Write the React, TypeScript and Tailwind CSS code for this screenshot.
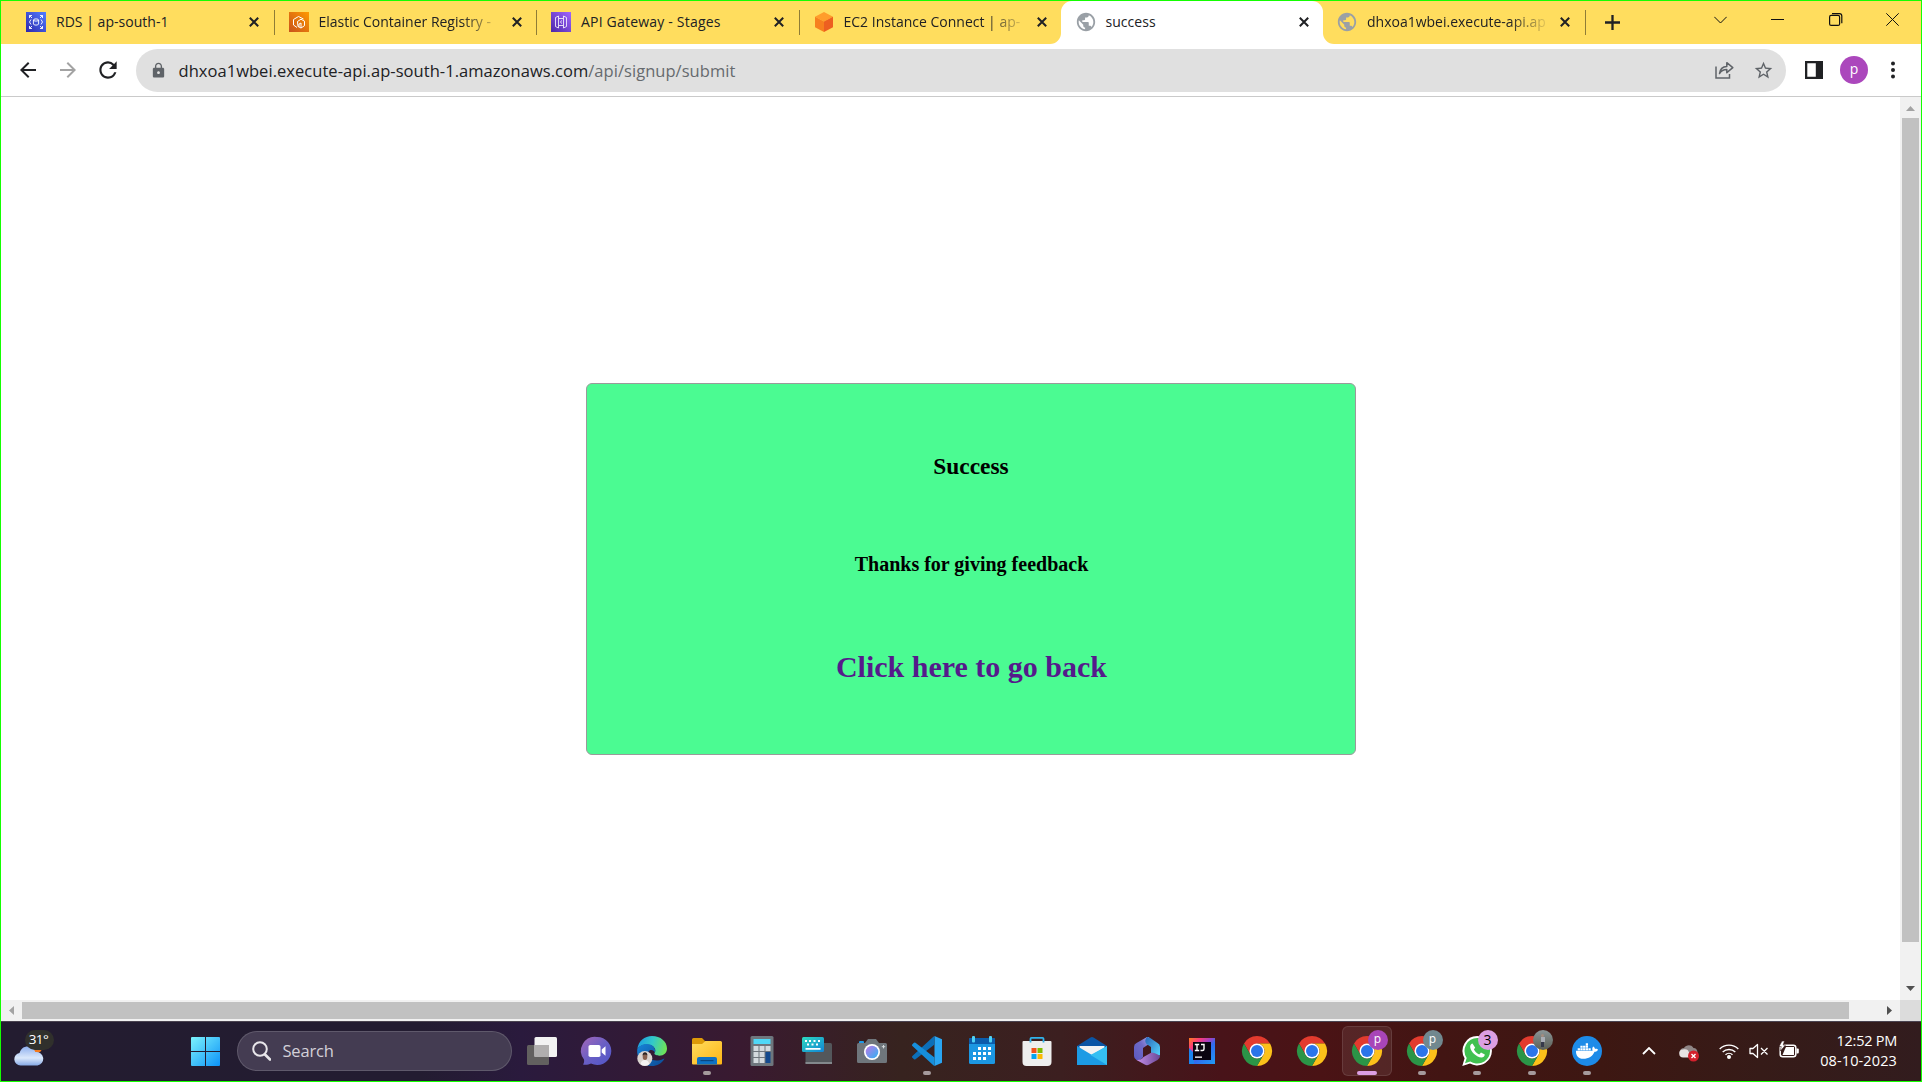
import type { ReactNode } from "react";
import { MdArrowBack, MdArrowForward, MdLock, MdPublic, MdRefresh, MdStarBorder } from "react-icons/md";
import { FaDocker } from "react-icons/fa";

const UI = "font-['Open_Sans','Noto_Sans',sans-serif]";

/* ---------- tab strip ---------- */

function RdsIcon() {
  return (
    <svg width="20" height="20" viewBox="0 0 20 20">
      <defs>
        <linearGradient id="rds" x1="0" y1="1" x2="1" y2="0">
          <stop offset="0" stopColor="#2E27AD" />
          <stop offset="1" stopColor="#527FFF" />
        </linearGradient>
      </defs>
      <rect width="20" height="20" fill="url(#rds)" />
      <g fill="none" stroke="#fff" strokeWidth=".9">
        <path d="M3.500 6V3.500H6M3.500 3.500L6 6M14 3.500h2.500V6M16.500 3.500L14 6M3.500 14v2.500H6M3.500 16.500L6 14M14 16.500h2.500V14M16.500 16.500L14 14" />
        <ellipse cx="10" cy="8" rx="2.600" ry="1.100" />
        <path d="M7.400 8v4c0 1.500 5.200 1.500 5.200 0V8M5 7.500L3.500 10 5 12.500M15 7.500l1.500 2.500-1.500 2.500" />
      </g>
    </svg>
  );
}

function EcrIcon() {
  return (
    <svg width="20" height="20" viewBox="0 0 20 20">
      <defs>
        <linearGradient id="ecr" x1="0" y1="1" x2="1" y2="0">
          <stop offset="0" stopColor="#C8511B" />
          <stop offset="1" stopColor="#FF9900" />
        </linearGradient>
      </defs>
      <rect width="20" height="20" fill="url(#ecr)" />
      <g fill="none" stroke="#fff" strokeWidth="1" strokeLinejoin="round">
        <path d="M8 15.500L4.500 13V7.500L9.500 4.500l5 2.500" />
        <path d="M8.500 9.500L12 7.200l3.500 2v4.500L12 16l-3-1.500zM12 16v-5l-2 1v3" />
      </g>
    </svg>
  );
}

function ApiIcon() {
  return (
    <svg width="20" height="20" viewBox="0 0 20 20">
      <defs>
        <linearGradient id="apigw" x1="0" y1="1" x2="1" y2="0">
          <stop offset="0" stopColor="#4D27A8" />
          <stop offset="1" stopColor="#A166FF" />
        </linearGradient>
      </defs>
      <rect width="20" height="20" fill="url(#apigw)" />
      <g fill="none" stroke="#fff" strokeWidth=".8">
        <path d="M7.500 4L4.500 5.500v9l3 1.500zM12.500 4l3 1.500v9l-3 1.500zM8 6.500h4M8 13.500h4M11 8.500L9.300 10l1.700 1.500" />
      </g>
    </svg>
  );
}

function Ec2Icon() {
  return (
    <svg width="20" height="20" viewBox="0 0 20 20">
      <path d="M10 0l9 4.800-9 4.700L1 4.800z" fill="#FF9D2B" />
      <path d="M1 4.800l9 4.700V20l-9-4.800z" fill="#F7801E" />
      <path d="M19 4.800L10 9.500V20l9-4.800z" fill="#ED5F20" />
    </svg>
  );
}

const Globe = () => <MdPublic className="size-[22px] shrink-0 text-[#9aa0a6]" />;

function Tab({ icon, title, spacing, fade }: { icon: ReactNode; title: string; spacing: string; fade?: boolean }) {
  return (
    <div className="flex h-[42px] w-[262.5px] shrink-0 items-center pl-[14px]">
      <div className="flex size-5 shrink-0 items-center justify-center">{icon}</div>
      <div
        className={`ml-2.5 w-[178px] text-[14px] leading-5 whitespace-nowrap text-[#202124] ${spacing} ${
          fade ? "[mask-image:linear-gradient(to_right,#000_80%,transparent_103%)]" : ""
        }`}
      >
        {title}
      </div>
      <svg className="ml-[15px] shrink-0" width="10" height="10" viewBox="0 0 10 10">
        <path d="M.8.8l8.400 8.400M9.200.8L.8 9.200" stroke="#202124" strokeWidth="2" />
      </svg>
    </div>
  );
}

const Divider = () => <div className="mt-[9px] -ml-px h-[25px] w-px shrink-0 bg-[#8f7c36]" />;

function TabStrip() {
  return (
    <div className="flex h-[43px] shrink-0 bg-white">
      <div className="flex w-[1060px] items-start rounded-br-[11px] bg-[#ffdd5e] pl-[11px]">
        <Tab icon={<RdsIcon />} title="RDS | ap-south-1" spacing="tracking-[0.030px]" />
        <Divider />
        <Tab icon={<EcrIcon />} title="Elastic Container Registry -" spacing="tracking-[-0.010px]" fade />
        <Divider />
        <Tab icon={<ApiIcon />} title="API Gateway - Stages" spacing="tracking-[0.200px]" />
        <Divider />
        <Tab icon={<Ec2Icon />} title="EC2 Instance Connect | ap-" spacing="tracking-[0px]" fade />
      </div>
      <div className="w-[262px] bg-[linear-gradient(#ffdd5e_50%,#ffffff_50%)]">
        <div className="flex h-full items-start rounded-t-[11px] bg-white pl-[0.500px]">
          <Tab icon={<Globe />} title="success" spacing="tracking-[0.050px]" />
        </div>
      </div>
      <div className="flex flex-1 items-start rounded-bl-[11px] bg-[#ffdd5e]">
        <Tab icon={<Globe />} title="dhxoa1wbei.execute-api.ap" spacing="tracking-[0px]" fade />
        <Divider />
        <svg className="mt-[14px] ml-[19px]" width="15" height="15" viewBox="0 0 15 15">
          <path d="M7.500 0v15M0 7.500h15" stroke="#202124" strokeWidth="2.300" />
        </svg>
        <div className="ml-[94px] flex h-full items-start gap-[44.500px] pt-[12px]">
          <svg width="13" height="13" viewBox="0 0 13 13" fill="none" stroke="#111">
            <path d="M.3 3.800l6.200 6.200 6.200-6.200" />
          </svg>
          <svg width="13" height="13" viewBox="0 0 13 13" stroke="#111">
            <path d="M0 6.500h13" />
          </svg>
          <svg width="13" height="13" viewBox="0 0 13 13" fill="none" stroke="#111" strokeWidth="1.200" overflow="visible">
            <rect x=".6" y="2.400" width="10" height="10" rx="1.500" />
            <path d="M3 .6h7.500a2.300 2.300 0 0 1 2.300 2.300v7.300" />
          </svg>
          <svg width="13" height="13" viewBox="0 0 13 13" stroke="#111">
            <path d="M.3.3l12.400 12.400M12.700.3L.3 12.700" />
          </svg>
        </div>
      </div>
    </div>
  );
}

/* ---------- address bar ---------- */

function Toolbar() {
  return (
    <div className="flex h-[53px] shrink-0 items-center border-b border-[#cacaca] bg-white">
      <MdArrowBack className="ml-[15px] size-6 text-[#202124]" />
      <MdArrowForward className="ml-4 size-6 text-[#a3a3a3]" />
      <MdRefresh className="ml-[15px] size-[26px] text-[#202124]" />
      <div className="ml-[15px] flex h-[43px] w-[1650px] items-center rounded-full bg-[#e0e0e0]">
        <MdLock className="ml-[14px] size-[17px] text-[#5f6368]" />
        <div className="mt-px ml-[11.500px] flex-1 text-[16.500px] leading-6 tracking-[0.045px] whitespace-nowrap text-[#202124]">
          dhxoa1wbei.execute-api.ap-south-1.amazonaws.com<span className="text-[#666a6e]">/api/signup/submit</span>
        </div>
        <svg width="19" height="18" viewBox="0 0 19 18" fill="none" stroke="#5f6368" strokeWidth="1.500">
          <path d="M1 5.500V17h13.500v-4" />
          <path d="M4.500 12.500c.6-4.500 3.200-6.800 7.300-7V1.700l6 5-6 5V8.600c-3.300 0-5.600 1.200-7.300 3.900z" strokeLinejoin="round" />
        </svg>
        <MdStarBorder className="mr-[12px] ml-[19px] size-[21px] text-[#5f6368]" />
      </div>
      <svg className="ml-[19px]" width="18" height="18" viewBox="0 0 18 18">
        <path d="M0 0h18v18H0zM2.300 2.300v13.400h8.500V2.300z" fill="#202124" fillRule="evenodd" />
      </svg>
      <div className="ml-[17px] flex size-7 items-center justify-center rounded-full bg-[#ab47bc] pb-[3px] text-[14px] leading-none text-white">
        p
      </div>
      <svg className="ml-[23px]" width="4" height="18" viewBox="0 0 4 18" fill="#202124">
        <circle cx="2" cy="2.500" r="2" />
        <circle cx="2" cy="9" r="2" />
        <circle cx="2" cy="15.500" r="2" />
      </svg>
    </div>
  );
}

/* ---------- page ---------- */

function Page() {
  return (
    <div className="flex h-[903px] shrink-0">
      <div className="flex-1 bg-white">
        <div className="mt-[286px] ml-[585px] flex h-[372px] w-[770px] flex-col items-center rounded-md border border-[#9a9a9a] bg-[#4bfb92] font-['Liberation_Serif',serif] font-bold whitespace-nowrap text-black">
          <h3 className="mt-[69px] text-[23.400px] leading-[27px]">Success</h3>
          <h4 className="mt-[73px] pl-px text-[20px] leading-[23px]">Thanks for giving feedback</h4>
          <h2 className="mt-[74px] pl-px text-[30px] leading-[34px] text-[#551a8b]">Click here to go back</h2>
        </div>
      </div>
      <div className="flex w-[21px] flex-col items-center bg-[#f1f1f1]">
        <svg className="mt-[9px]" width="9" height="5" viewBox="0 0 9 5">
          <path d="M0 5L4.500 0 9 5z" fill="#a3a3a3" />
        </svg>
        <div className="mt-[7px] h-[824px] w-[17px] bg-[#c1c1c1]" />
        <svg className="mt-[44px]" width="9" height="5" viewBox="0 0 9 5">
          <path d="M0 0l4.500 5L9 0z" fill="#505050" />
        </svg>
      </div>
    </div>
  );
}

function HorizontalScroll() {
  return (
    <div className="flex h-[21px] shrink-0 items-center bg-[#f1f1f1]">
      <svg className="ml-2" width="5" height="9" viewBox="0 0 5 9">
        <path d="M5 0L0 4.500 5 9z" fill="#a3a3a3" />
      </svg>
      <div className="ml-[8px] h-[17px] w-[1827px] bg-[#c1c1c1]" />
      <svg className="ml-[38px]" width="5" height="9" viewBox="0 0 5 9">
        <path d="M0 0l5 4.500L0 9z" fill="#505050" />
      </svg>
      <div className="ml-auto h-full w-[21px] bg-[#dcdcdc]" />
    </div>
  );
}

/* ---------- taskbar ---------- */

function Icon({ children }: { children: ReactNode }) {
  return (
    <svg width="30" height="30" viewBox="0 0 30 30" overflow="visible">
      {children}
    </svg>
  );
}

const TaskView = () => (
  <Icon>
    <rect x="0" y="9" width="22" height="20" rx="1.500" fill="#62605f" />
    <rect x="7.500" y="1" width="22.500" height="20" rx="1.500" fill="#f2f2f2" />
    <rect x="7.500" y="9" width="14.500" height="12" fill="#b0aeae" />
  </Icon>
);

const Chat = () => (
  <Icon>
    <defs>
      <linearGradient id="chat" x1="0" y1="0" x2="1" y2="1">
        <stop offset="0" stopColor="#a567b8" />
        <stop offset=".5" stopColor="#6a5fc4" />
        <stop offset="1" stopColor="#4f55c9" />
      </linearGradient>
    </defs>
    <path d="M15 1a14 14 0 1 1-6 26.500C6.500 28.800 3.500 29 1 28.500c1.200-1.800 1.300-3.500 1-5A14 14 0 0 1 15 1z" fill="url(#chat)" />
    <rect x="6.500" y="9" width="12" height="12" rx="1.800" fill="#fff" />
    <path d="M19.700 13.500l3.800-3.200v9.400l-3.800-3.200z" fill="#fff" />
  </Icon>
);

const Edge = () => (
  <Icon>
    <defs>
      <linearGradient id="edgeTop" x1="0" y1=".3" x2="1" y2=".5">
        <stop offset="0" stopColor="#1b9de2" />
        <stop offset=".5" stopColor="#33c9c9" />
        <stop offset="1" stopColor="#6fe356" />
      </linearGradient>
      <linearGradient id="edgeBody" x1="0" y1="0" x2="1" y2="1">
        <stop offset="0" stopColor="#1683d8" />
        <stop offset="1" stopColor="#0c4a94" />
      </linearGradient>
    </defs>
    <path d="M.3 13C1.500 5 7.500 0 15 0c8.500 0 15 5.500 15 12.500 0 4.500-3.300 7.200-7.500 7.200-3.500 0-5.500-1.300-5-2.600 1.700-2 1.200-6-4-8C8.500 7.500 3 9 .3 13z" fill="url(#edgeTop)" />
    <path d="M.2 13.500C2.500 9 8 6.800 13 8.500c4 1.400 6 5 4.800 8-1.700-3-5-3.200-6.500-.5-1.600 3 1.700 9.500 9.700 8.500 2.600-.3 4.700-1.200 6.500-2C24.500 28 20 30 15 30 6 30-.7 22.500.2 13.500z" fill="url(#edgeBody)" />
    <circle cx="7.800" cy="22.500" r="7.500" fill="#d9d3cf" />
    <path d="M3.500 28.200c.5-3 2-4.200 4.300-4.200s4 1.200 4.500 4.200a7.500 7.500 0 0 1-8.800 0z" fill="#f4f2f2" />
    <ellipse cx="8" cy="20.800" rx="2.300" ry="3.300" fill="#86604e" />
    <path d="M5.500 19.500c0-4.500 5-4.500 5 0-1.500-1.500-3.500-1.500-5 0z" fill="#2a2322" />
  </Icon>
);

const Folder = () => (
  <Icon>
    <defs>
      <linearGradient id="folder" x1="0" y1="0" x2="1" y2="1">
        <stop offset="0" stopColor="#ffdc5e" />
        <stop offset="1" stopColor="#fdb515" />
      </linearGradient>
    </defs>
    <path d="M0 3.500A1.500 1.500 0 0 1 1.500 2H10l3 3h15v8H0z" fill="#dd9a08" />
    <path d="M0 8h10l3.500-3H28.500A1.500 1.500 0 0 1 30 6.500v21a1 1 0 0 1-1 1H1a1 1 0 0 1-1-1z" fill="url(#folder)" />
    <path d="M5 28.500V23a2 2 0 0 1 2-2h16a2 2 0 0 1 2 2v5.500z" fill="#0f72c4" />
    <rect x="8.500" y="24" width="13" height="1.200" fill="#0a4680" />
  </Icon>
);

const Calculator = () => (
  <Icon>
    <rect x="3.500" y="0" width="23" height="30" rx="1.500" fill="#6e767d" />
    <rect x="6.500" y="3" width="17" height="5" fill="#4fd8f7" />
    <g fill="#d3dade">
      <path d="M6.500 10h5v5h-5zM12.500 10h5v5h-5zM18.500 10h5v5h-5zM6.500 16h5v5h-5zM12.500 16h5v5h-5zM6.500 22h5v5h-5zM12.500 22h5v5h-5z" />
    </g>
    <path d="M18.500 16h5v11h-5z" fill="#134a8e" />
  </Icon>
);

const Keyboard = () => (
  <Icon>
    <defs>
      <linearGradient id="kb" x1="0" y1="0" x2="1" y2="1">
        <stop offset="0" stopColor="#2cdcc0" />
        <stop offset="1" stopColor="#1283d6" />
      </linearGradient>
    </defs>
    <rect x="3.500" y="7" width="26.500" height="21" rx="1.500" fill="#53575b" />
    <rect x="3.500" y="26" width="26.500" height="2" fill="#83888c" />
    <rect x="0" y="1" width="22" height="15" rx="1.500" fill="url(#kb)" />
    <g fill="#fff">
      <path d="M3 4h2v2H3zM7 4h2v2H7zM11.500 4h2v2h-2zM16 4h2v2h-2zM5 7.500h2v2H5zM9.500 7.500h2v2h-2zM14 7.500h2v2h-2zM3.500 12h15v1.800h-15z" />
    </g>
  </Icon>
);

const Camera = () => (
  <Icon>
    <defs>
      <linearGradient id="lens" x1="0" y1="0" x2="1" y2="1">
        <stop offset="0" stopColor="#c178e8" />
        <stop offset="1" stopColor="#2cb2f2" />
      </linearGradient>
    </defs>
    <rect x="2" y="5" width="5" height="4" rx="1" fill="#1e9be8" />
    <path d="M0 8.500A1.500 1.500 0 0 1 1.500 7H8l3-4h8l3 4h6.500A1.500 1.500 0 0 1 30 8.500v17a1.500 1.500 0 0 1-1.500 1.500h-27A1.500 1.500 0 0 1 0 25.500z" fill="#6f767c" />
    <circle cx="15" cy="16" r="8" fill="#fff" />
    <circle cx="15" cy="16" r="6.300" fill="url(#lens)" />
    <path d="M26.500 9v3.400M24.800 10.700h3.400" stroke="#d5dadd" strokeWidth="1" />
  </Icon>
);

const VsCode = () => (
  <Icon>
    <path d="M22.500 0L30 3.300v23.400L22.500 30z" fill="#29a5f2" />
    <path d="M22.500 0v8.500L3.500 23.200a1.200 1.200 0 0 1-1.500 0L.4 21.700a1.200 1.200 0 0 1 0-1.800L21.300.8z" fill="#0c6fb8" />
    <path d="M22.500 30v-8.500L3.500 6.800a1.200 1.200 0 0 0-1.500 0L.4 8.300a1.200 1.200 0 0 0 0 1.800l20.900 19.100z" fill="#168fdc" />
  </Icon>
);

const Calendar = () => (
  <Icon>
    <rect x="2" y="2" width="26" height="26" rx="1.500" fill="#1c97e2" />
    <path d="M2 3.500A1.500 1.500 0 0 1 3.500 2h23A1.500 1.500 0 0 1 28 3.500V8H2z" fill="#0b5cab" />
    <rect x="5" y="0" width="3" height="6.500" rx="1" fill="#4fd2f5" />
    <rect x="22" y="0" width="3" height="6.500" rx="1" fill="#4fd2f5" />
    <path d="M11 11h3v3h-3zM16 11h3v3h-3zM21 11h3v3h-3zM6 16h3v3H6zM11 16h3v3h-3zM16 16h3v3h-3zM21 16h3v3h-3zM6 21h3v3H6zM11 21h3v3h-3zM16 21h3v3h-3z" fill="#fff" />
  </Icon>
);

const Store = () => (
  <Icon>
    <path d="M.5 6a1 1 0 0 1 1-1h27a1 1 0 0 1 1 1v20a4 4 0 0 1-4 4h-21a4 4 0 0 1-4-4z" fill="#eeeeee" />
    <path d="M8.500 6.500V2.800A1 1 0 0 1 9.500 1.800h11a1 1 0 0 1 1 1v3.700" fill="none" stroke="#30b4ec" strokeWidth="1.800" />
    <path d="M9.500 12h5v5h-5z" fill="#f1511b" />
    <path d="M15.500 12h5v5h-5z" fill="#80bb01" />
    <path d="M9.500 18h5v5h-5z" fill="#04a4ef" />
    <path d="M15.500 18h5v5h-5z" fill="#fbb902" />
  </Icon>
);

const Mail = () => (
  <Icon>
    <path d="M0 10L13.500 1.500a3 3 0 0 1 3 0L30 10v6H0z" fill="#0b55a5" />
    <path d="M2.500 10h25v9h-25z" fill="#f3f3f3" />
    <path d="M0 10l15 9 15-9v19H0z" fill="#1c9be5" />
    <path d="M30 10L13.500 19 30 29z" fill="#35bff2" />
  </Icon>
);

const Office = () => (
  <Icon>
    <defs>
      <linearGradient id="of1" x1="0" y1="1" x2="1" y2="0">
        <stop offset="0" stopColor="#5b58c0" />
        <stop offset=".6" stopColor="#6f6bc8" />
        <stop offset="1" stopColor="#a9a4e8" />
      </linearGradient>
      <linearGradient id="of2" x1="0" y1="0" x2="1" y2=".8">
        <stop offset="0" stopColor="#2a66b8" />
        <stop offset="1" stopColor="#52c9f6" />
      </linearGradient>
      <linearGradient id="of3" x1="0" y1="0" x2="1" y2="0">
        <stop offset="0" stopColor="#c690ea" />
        <stop offset="1" stopColor="#6a4896" />
      </linearGradient>
    </defs>
    <path d="M15 1L4.500 7A4.500 4.500 0 0 0 2 11v9a4.500 4.500 0 0 0 2.500 4c3 .5 5-.5 6.500-3V12l6-4V1z" fill="url(#of1)" />
    <path d="M15 1c-2 2-2.500 5-.5 7l4.500 3v7.500l9 1V11a4.500 4.500 0 0 0-2.500-4L17.500 1.600C16.700 1.100 16 .9 15 1z" fill="url(#of2)" />
    <path d="M4.500 24c3 .5 5.500-1 7-3l8-4.500c4 .5 7 2 8.500 3.500a4.500 4.500 0 0 1-2.500 4l-8.300 4.500a4.500 4.500 0 0 1-4.500 0z" fill="url(#of3)" />
  </Icon>
);

const IntelliJ = () => (
  <Icon>
    <defs>
      <linearGradient id="ij" x1="0" y1="0" x2="1" y2="1">
        <stop offset="0" stopColor="#fc801d" />
        <stop offset=".22" stopColor="#fe3b78" />
        <stop offset=".42" stopColor="#a83fc0" />
        <stop offset=".58" stopColor="#2f6cf0" />
        <stop offset="1" stopColor="#1f9bf5" />
      </linearGradient>
    </defs>
    <rect x="2" y="2" width="26" height="26" fill="url(#ij)" />
    <path d="M2 12l5 5v11H2z" fill="#1c84ee" />
    <rect x="6" y="6" width="18" height="18" fill="#0a0510" />
    <path d="M7.800 8.500h4.400M10 8.500v6M7.800 14.500h4.400M14 8.500h3v4.500q0 1.500-1.600 1.500H13.500" fill="none" stroke="#fff" strokeWidth="1.400" />
    <path d="M8 20.500h7v1.300H8z" fill="#fff" />
  </Icon>
);

const Chrome = () => (
  <Icon>
    <path d="M2 7.500A15 15 0 0 1 28 7.500H15L8.500 18.750z" fill="#e33b2e" />
    <path d="M28 7.500A15 15 0 0 1 15 30l6.500-11.250A7.500 7.500 0 0 0 15 7.500z" fill="#fcc11a" />
    <path d="M15 30A15 15 0 0 1 2 7.500l6.500 11.250A7.500 7.500 0 0 0 21.500 18.750z" fill="#2b9547" />
    <circle cx="15" cy="15" r="7.500" fill="#fff" />
    <circle cx="15" cy="15" r="6" fill="#2a74ea" />
  </Icon>
);

const WhatsApp = () => (
  <Icon>
    <path d="M15.300 0A14.700 14.700 0 1 1 8 27.500L.3 30l2.300-7.800A14.700 14.700 0 0 1 15.300 0z" fill="#fff" />
    <path d="M15.300 2A12.800 12.800 0 1 1 8.300 25.500L3 27.200l1.700-5.300A12.800 12.800 0 0 1 15.300 2z" fill="#41c150" />
    <path d="M10.500 7.500c-1.800.5-2.500 2-2.300 3.800.5 4.500 6.300 10 11.300 10.200 1.700 0 3.200-1.200 3.300-3l-3.800-2-1.800 2c-2.500-1-4.500-3-5.300-5.200l1.300-1.500z" fill="#fff" />
  </Icon>
);

const Docker = () => (
  <div className="flex size-[30px] items-center justify-center rounded-full bg-[#1d8be8]">
    <FaDocker className="size-[22px] text-white" />
  </div>
);

function Badge({ className, children }: { className: string; children?: ReactNode }) {
  return (
    <div className={`absolute -top-1.5 left-[16px] flex size-5 items-center justify-center rounded-full leading-none ${className}`}>
      {children}
    </div>
  );
}

type AppEntry = { icon: ReactNode; badge?: ReactNode; open?: boolean; active?: boolean };

const apps: AppEntry[] = [
  { icon: <TaskView /> },
  { icon: <Chat /> },
  { icon: <Edge /> },
  { icon: <Folder />, open: true },
  { icon: <Calculator /> },
  { icon: <Keyboard /> },
  { icon: <Camera /> },
  { icon: <VsCode />, open: true },
  { icon: <Calendar /> },
  { icon: <Store /> },
  { icon: <Mail /> },
  { icon: <Office /> },
  { icon: <IntelliJ /> },
  { icon: <Chrome /> },
  { icon: <Chrome /> },
  { icon: <Chrome />, active: true, badge: <Badge className="bg-[#a845b8] pb-0.5 text-[12px] text-white">p</Badge> },
  { icon: <Chrome />, open: true, badge: <Badge className="bg-[#71888f] pb-0.5 text-[12px] text-white">p</Badge> },
  { icon: <WhatsApp />, open: true, badge: <Badge className="bg-[#dc9fe3] text-[14px] text-black">3</Badge> },
  {
    icon: <Chrome />,
    open: true,
    badge: (
      <Badge className="flex-col bg-[linear-gradient(#8b9698,#5c5f56)]">
        <div className="size-[3px] rounded-full bg-[#a58d80]" />
        <div className="h-[5px] w-1 bg-[#a9adb5]" />
        <div className="h-[5px] w-[3px] bg-[#36394a]" />
      </Badge>
    ),
  },
  { icon: <Docker />, open: true },
];

function AppButton({ app }: { app: AppEntry }) {
  return (
    <div className="flex w-[55px] shrink-0 justify-center">
      <div
        className={`flex h-[50px] w-[50px] flex-col items-center rounded-md border ${
          app.active ? "border-white/10 bg-white/8" : "border-transparent"
        } pt-[9px]`}
      >
        <div className="relative size-[30px]">
          {app.icon}
          {app.badge}
        </div>
        {app.active && <div className="mt-[5px] h-1 w-5 rounded-full bg-[#dc9fe3]" />}
        {app.open && <div className="mt-[5px] h-1 w-2 rounded-full bg-[#a59a9c]" />}
      </div>
    </div>
  );
}

function Weather() {
  return (
    <div className="relative mb-0.5 ml-[13px] h-[40px] w-[41px]">
      <svg className="mt-4" width="30" height="20" viewBox="0 0 30 20">
        <defs>
          <linearGradient id="cloud" x1="0" y1="0" x2="0" y2="1">
            <stop offset="0" stopColor="#8fb0ee" />
            <stop offset=".6" stopColor="#dbe8fb" />
            <stop offset="1" stopColor="#86a9e6" />
          </linearGradient>
        </defs>
        <circle cx="23" cy="2" r="5" fill="#f47a1c" />
        <path d="M6.500 19.500a6.300 6.300 0 0 1-1-12.500C7 2.500 10 .5 13.500.5c4 0 6.500 2.300 7.800 5.500a6.800 6.800 0 0 1 2.200 13.500z" fill="url(#cloud)" />
      </svg>
      <div className="absolute top-0 left-[10.500px] flex h-5 w-[29px] items-center justify-center rounded-full bg-[#30302c] pr-px text-[13.500px] leading-none tracking-[-0.500px] text-white">
        31°
      </div>
    </div>
  );
}

function Tray() {
  return (
    <div className="flex flex-1 items-center">
      <svg className="ml-[28px]" width="14" height="8" viewBox="0 0 14 8">
        <path d="M1 7l6-6 6 6" fill="none" stroke="#fff" strokeWidth="1.800" />
      </svg>
      <svg className="mt-1 ml-[23px]" width="21" height="18" viewBox="0 0 21 18">
        <path d="M5 13a4.500 4.500 0 0 1 0-9C7 1 12 0 14.500 4c2.500 0 4 2 4 4.500S17 13 15 13z" fill="#8f8686" />
        <path d="M4.500 13.500a4 4 0 0 1-.5-8c3.500-.8 5.500.5 6 3l3 5z" fill="#e8e4e4" />
        <circle cx="14.500" cy="12" r="5.500" fill="#d3202c" />
        <path d="M12.500 10l4 4M16.500 10l-4 4" stroke="#fff" strokeWidth="1.400" />
      </svg>
      <svg className="ml-[19px]" width="20" height="16" viewBox="0 0 20 16" fill="none" stroke="#fff" strokeWidth="1.400">
        <path d="M.7 6a13 13 0 0 1 18.600 0M3.700 9a9 9 0 0 1 12.600 0M6.500 11.800a5 5 0 0 1 7 0" />
        <circle cx="10" cy="14" r="1.300" fill="#fff" />
      </svg>
      <svg className="ml-[10px]" width="20" height="16" viewBox="0 0 20 16" fill="none" stroke="#fff" strokeWidth="1.300">
        <path d="M1 5.500h3L8.500 1.500v13L4 10.500H1zM12 5l6.500 6.500M18.500 5L12 11.500" strokeLinejoin="round" />
      </svg>
      <svg className="-mt-1 ml-[10px]" width="20" height="17" viewBox="0 0 20 17">
        <rect x="1.200" y="4.200" width="15.600" height="11.600" rx="2.500" fill="none" stroke="#fff" strokeWidth="1.500" />
        <path d="M17.500 7.500h1.300a1 1 0 0 1 1 1v3a1 1 0 0 1-1 1h-1.300z" fill="#fff" />
        <path d="M7 6h8v8H3.500L6 8z" fill="#fff" />
        <path d="M3 0L0 5.500h2.200L1.500 10 6.500 4H4.200L5.500 0z" fill="#fff" stroke="#35191a" strokeWidth=".6" />
      </svg>
      <div className="mr-[24px] mb-px ml-auto text-right text-[14.500px] leading-5 whitespace-nowrap text-white">
        <div className="tracking-[-0.250px]">12:52 PM</div>
        <div className="tracking-[0.120px]">08-10-2023</div>
      </div>
    </div>
  );
}

function Taskbar() {
  return (
    <div className="flex h-[60px] shrink-0 items-center border-t border-[#4a4350] bg-[linear-gradient(to_right,#231c30_0px,#231c31_420px,#2a1a3d_520px,#391a30_740px,#37231f_900px,#3c1f20_1060px,#481319_1220px,#4a1315_1320px,#421513_1440px,#3d1712_1600px,#361b18_1760px,#321c1e_1920px)] pb-px">
      <Weather />
      <svg className="ml-[136px]" width="29" height="29" viewBox="0 0 29 29">
        <defs>
          <linearGradient id="win" x1="0" y1="0" x2="1" y2="1">
            <stop offset="0" stopColor="#7cf3fc" />
            <stop offset="1" stopColor="#0c92f8" />
          </linearGradient>
        </defs>
        <path d="M1 0h13v14H0V1a1 1 0 0 1 1-1zM15 0h13a1 1 0 0 1 1 1v13H15zM0 15h14v14H1a1 1 0 0 1-1-1zM15 15h14v13a1 1 0 0 1-1 1H15z" fill="url(#win)" />
      </svg>
      <div className="ml-[17px] flex h-10 w-[275px] items-center rounded-full border border-white/15 bg-[#443c52]">
        <svg className="ml-[13.500px]" width="19" height="20" viewBox="0 0 19 20" fill="none" stroke="#e8e6ea">
          <circle cx="8" cy="8" r="6.800" strokeWidth="2" />
          <path d="M13 13.500l5 5" strokeWidth="2.600" strokeLinecap="round" />
        </svg>
        <span className="ml-[12px] text-[16.500px] leading-6 tracking-[-0.200px] text-[#d3d0d8]">Search</span>
      </div>
      <div className="ml-[2px] flex">
        {apps.map((app, i) => (
          <AppButton key={i} app={app} />
        ))}
      </div>
      <Tray />
    </div>
  );
}

export default function App() {
  return (
    <div className={`flex h-[1082px] w-[1922px] flex-col overflow-hidden border border-[#14ff00] ${UI}`}>
      <TabStrip />
      <Toolbar />
      <Page />
      <HorizontalScroll />
      <Taskbar />
    </div>
  );
}
